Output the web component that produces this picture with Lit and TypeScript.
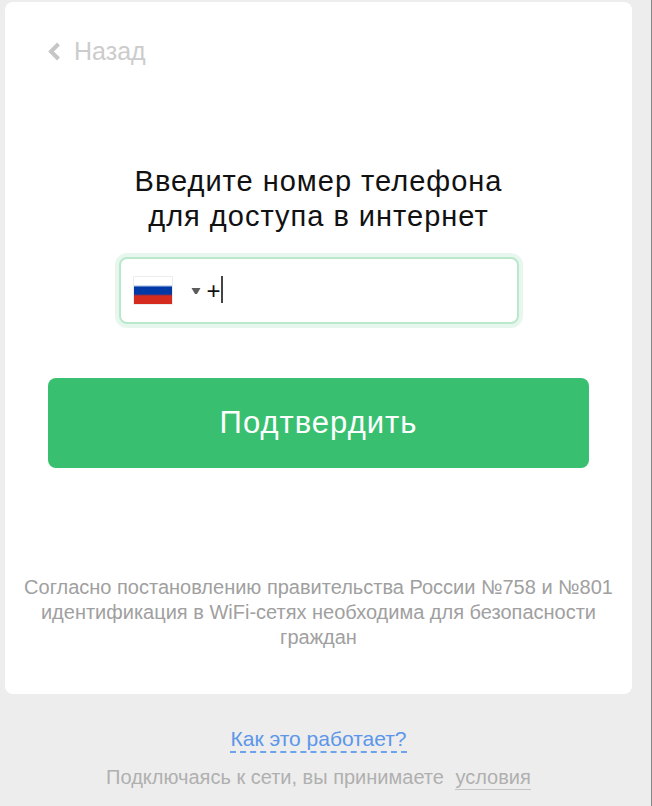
import { LitElement, html, css } from "lit";
import { customElement, state } from "lit/decorators.js";

@customElement("country-picker")
class CountryPicker extends LitElement {
  static styles = css`
    :host {
      display: block;
      flex: none;
    }
    .picker {
      position: relative;
      display: flex;
      align-items: center;
      gap: 18px;
      padding: 0 6px 0 12px;
      height: 100%;
    }
    .flag {
      display: block;
      width: 40px;
      height: 29px;
    }
    .arrow {
      display: block;
      width: 10px;
      height: 6px;
    }
    .select {
      position: absolute;
      inset: 0;
      width: 100%;
      height: 100%;
      opacity: 0;
      cursor: pointer;
    }
  `;

  render() {
    return html`
      <div class="picker">
        <svg class="flag" viewBox="0 0 40 29" aria-hidden="true">
          <defs>
            <linearGradient id="stripes" x1="0" y1="0" x2="0" y2="1">
              <stop offset="0" stop-color="#fff" />
              <stop offset="0.3" stop-color="#fff" />
              <stop offset="0.38" stop-color="#0039a6" />
              <stop offset="0.63" stop-color="#0039a6" />
              <stop offset="0.7" stop-color="#d52b1e" />
              <stop offset="1" stop-color="#d52b1e" />
            </linearGradient>
          </defs>
          <rect width="40" height="29" rx="1" fill="#ededed" />
          <rect x="1" y="1" width="38" height="27" fill="url(#stripes)" />
        </svg>
        <svg class="arrow" viewBox="0 0 10 6" aria-hidden="true">
          <path d="M0.5 0H9.5L6 6H4Z" fill="#5c5c5c" />
        </svg>
        <select class="select" aria-label="Страна">
          <option selected>Россия</option>
        </select>
      </div>
    `;
  }
}

@customElement("app-root")
class AppRoot extends LitElement {
  static styles = css`
    :host {
      display: block;
      box-sizing: border-box;
      min-height: 100vh;
      padding: 2px 19px 12px 5px;
      border-right: 1px solid #858585;
      background: #ededed;
      color: #111;
      font-family: "Liberation Sans", Arial, sans-serif;
      text-align: center;
    }
    .card {
      display: flex;
      flex-direction: column;
      padding: 34px 16px 44px;
      border-radius: 8px;
      background: #fff;
    }
    .back {
      display: flex;
      align-items: center;
      align-self: flex-start;
      gap: 14px;
      margin-left: 27px;
      padding: 0;
      border: 0;
      background: none;
      color: #ccc;
      font: 25px/30px "Liberation Sans", Arial, sans-serif;
      cursor: pointer;
    }
    .chevron {
      width: 12px;
      height: 20px;
    }
    .form {
      display: flex;
      flex-direction: column;
      align-items: center;
      margin: 98px 27px 0;
    }
    .title {
      margin: 0;
      font-size: 29px;
      font-weight: 400;
      line-height: 35px;
      letter-spacing: 1px;
    }
    .field {
      display: flex;
      box-sizing: border-box;
      width: 100%;
      max-width: 400px;
      height: 67px;
      margin-top: 23px;
      border: 2px solid #b9e8cc;
      border-radius: 8px;
      box-shadow: 0 0 0 4px #e8f7ee;
      background: #fff;
    }
    .entry {
      position: relative;
      display: flex;
      flex: 1;
      min-width: 0;
    }
    .phone {
      flex: 1;
      min-width: 0;
      padding: 0;
      border: 0;
      outline: 0;
      background: none;
      color: #111;
      caret-color: transparent;
      font: 24px "Liberation Sans", Arial, sans-serif;
    }
    .caret {
      position: absolute;
      top: 17px;
      left: 14px;
      width: 2px;
      height: 27px;
      background: #444;
    }
    .submit {
      width: 100%;
      height: 90px;
      margin-top: 54px;
      padding: 0;
      border: 0;
      border-radius: 8px;
      background: #38c070;
      color: #fff;
      font: 31px "Liberation Sans", Arial, sans-serif;
      letter-spacing: 1px;
      cursor: pointer;
    }
    .notice {
      margin: 107px 0 0;
      color: #a0a0a0;
      font-size: 20px;
      line-height: 25px;
    }
    .footer {
      display: flex;
      flex-direction: column;
      align-items: center;
      gap: 12px;
      margin-top: 33px;
      color: #b0b0b0;
      font-size: 20px;
      line-height: 24px;
    }
    .how {
      border-bottom: 2px dashed #6da2ec;
      color: #5c96ea;
      font-size: 21px;
      text-decoration: none;
    }
    .terms {
      margin: 0;
    }
    .terms-link {
      display: inline-block;
      margin-left: 6px;
      border-bottom: 1px solid #c4c4c4;
      color: inherit;
      text-decoration: none;
    }
  `;

  @state() phone = "+";

  render() {
    return html`
      <main class="card">
        <button class="back" type="button">
          <svg class="chevron" viewBox="0 0 12 20" aria-hidden="true">
            <path d="M10.5 3L3 10.5L10.5 18" fill="none" stroke="#c6c6c6" stroke-width="4" />
          </svg>
          Назад
        </button>
        <form class="form" @submit=${(e: Event) => e.preventDefault()}>
          <h1 class="title">Введите номер телефона<br />для доступа в интернет</h1>
          <div class="field">
            <country-picker></country-picker>
            <div class="entry">
              <input
                class="phone"
                type="tel"
                aria-label="Номер телефона"
                .value=${this.phone}
                @input=${(e: Event) => (this.phone = (e.target as HTMLInputElement).value)}
              />
              ${this.phone === "+" ? html`<span class="caret"></span>` : ""}
            </div>
          </div>
          <button class="submit" type="submit">Подтвердить</button>
        </form>
        <p class="notice">
          Согласно постановлению правительства России №758 и №801 идентификация
          в WiFi-сетях необходима для безопасности граждан
        </p>
      </main>
      <footer class="footer">
        <a class="how" href="#how">Как это работает?</a>
        <p class="terms">
          Подключаясь к сети, вы принимаете
          <a class="terms-link" href="#terms">условия</a>
        </p>
      </footer>
    `;
  }
}
